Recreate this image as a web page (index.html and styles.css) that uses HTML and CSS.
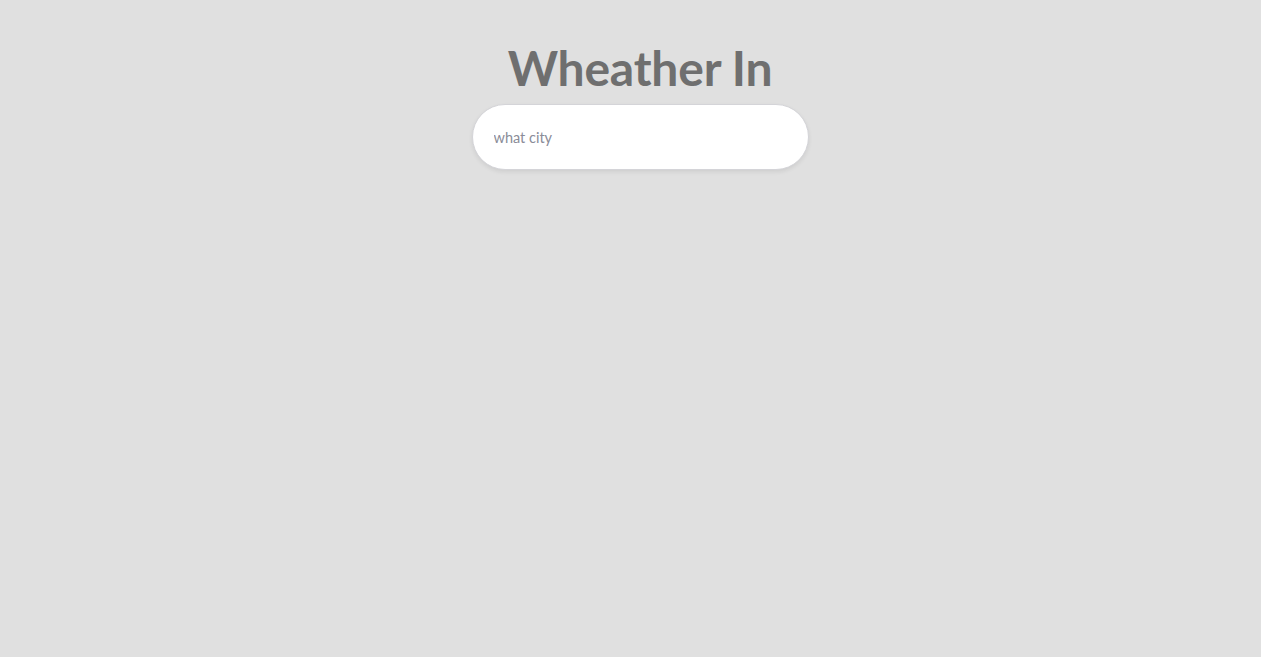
FILE: index.html
```html
<!DOCTYPE html>
<html>
<head>
<meta charset="utf-8">
<link rel="stylesheet" href="styles.css">
</head>
<body>
<main class="app">
  <h1 class="title">Wheather In</h1>
  <input class="search" type="text" placeholder="what city">
</main>
</body>
</html>
```
FILE: styles.css
```css
html, body {
  margin: 0;
  padding: 0;
  background: #e0e0e0;
  height: 100%;
}
.app {
  display: flex;
  flex-direction: column;
  align-items: center;
  padding-top: 38px;
  padding-left: 19px;
  font-family: Lato, "Noto Sans", sans-serif;
}
.title {
  margin: 0;
  font-size: 48px;
  line-height: 60px;
  font-weight: 700;
  color: #6f6f6f;
  letter-spacing: -0.2px;
}
.search {
  margin-top: 6px;
  box-sizing: border-box;
  width: 337px;
  height: 66px;
  border: 1px solid #d4d4d8;
  border-radius: 33px;
  background: #fff;
  padding: 0 21px;
  font-family: Lato, "Noto Sans", sans-serif;
  font-size: 14.5px;
  color: #555;
  outline: none;
  box-shadow: 0 2px 4px rgba(0,0,0,0.08);
}
.search::placeholder {
  color: #8a8c98;
}
```
